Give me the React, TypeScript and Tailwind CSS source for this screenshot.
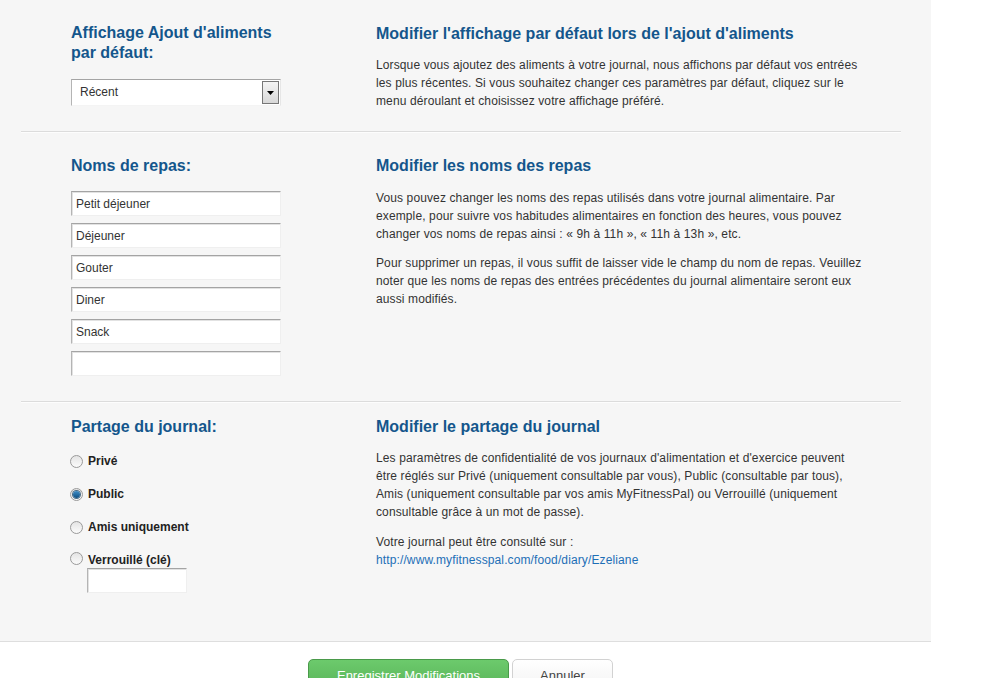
import React, { useState } from 'react';

const mealNames = ['Petit déjeuner', 'Déjeuner', 'Gouter', 'Diner', 'Snack', ''];

const privacyOptions = [
  { id: 'private', label: 'Privé' },
  { id: 'public', label: 'Public' },
  { id: 'friends', label: 'Amis uniquement' },
  { id: 'locked', label: 'Verrouillé (clé)' },
];

const Radio: React.FC<{ checked: boolean; onClick: () => void }> = ({ checked, onClick }) => (
  <span
    onClick={onClick}
    className="flex h-[13px] w-[13px] shrink-0 cursor-pointer items-center justify-center rounded-full border border-[#9a9a9a] bg-gradient-to-b from-[#e4e4e4] to-[#fbfbfb]"
  >
    {checked && (
      <span className="h-[7px] w-[7px] rounded-full bg-gradient-to-b from-[#3f8fc8] to-[#0d4f82] shadow-[0_0_0_1px_#4a6c86]" />
    )}
  </span>
);

const TextBox: React.FC<{ value: string; className?: string }> = ({ value, className = '' }) => (
  <input
    type="text"
    defaultValue={value}
    className={`block h-[25px] border border-t-[#a4a4a4] border-l-[#b4b4b4] border-r-[#efefef] border-b-[#efefef] bg-white pl-[4px] text-[12px] text-[#333] shadow-[inset_1px_1px_0_#e2e2e2] outline-none ${className}`}
  />
);

const App: React.FC = () => {
  const [privacy, setPrivacy] = useState('public');

  return (
    <div className="min-h-[678px] bg-white font-['Liberation_Sans',Arial,sans-serif] text-[#333]">
      <div className="w-[931px] border-b border-[#dedede] bg-[#f6f6f6]">
        <div className="ml-[21px] w-[880px]">
          {/* Default food display */}
          <div className="flex border-b border-[#dcdcdc] pb-[21px] pl-[50px] pt-[23px] shadow-[0_1px_0_#fdfdfd]">
            <div className="w-[305px]">
              <h2 className="text-[16px] font-bold leading-[20px] text-[#14568c]">
                Affichage Ajout d'aliments
                <br />
                par défaut:
              </h2>
              <div className="mt-[16px] flex h-[27px] w-[210px] border border-t-[#a4a4a4] border-l-[#b4b4b4] border-r-[#e6e6e6] border-b-[#f4f4f4] bg-white">
                <span className="flex-1 pl-[8px] text-[12px] leading-[25px] text-[#333]">Récent</span>
                <span className="my-[1px] mr-[1px] flex w-[17px] items-center justify-center border border-[#777] bg-gradient-to-b from-[#f4f4f4] to-[#d8d8d8]">
                  <svg width="7" height="4" viewBox="0 0 7 4">
                    <path d="M0 0h7L3.5 4z" fill="#000" />
                  </svg>
                </span>
              </div>
            </div>
            <div className="w-[492px] pt-[1px] tracking-[0.12px]">
              <h2 className="text-[16px] font-bold leading-[20px] tracking-normal text-[#14568c]">
                Modifier l'affichage par défaut lors de l'ajout d'aliments
              </h2>
              <p className="mt-[12px] text-[12px] leading-[18px]">
                Lorsque vous ajoutez des aliments à votre journal, nous affichons par défaut vos entrées les plus récentes.
                Si vous souhaitez changer ces paramètres par défaut, cliquez sur le menu déroulant et choisissez votre
                affichage préféré.
              </p>
            </div>
          </div>

          {/* Meal names */}
          <div className="flex border-b border-[#dcdcdc] pb-[25px] pl-[50px] pt-[24px] shadow-[0_1px_0_#fdfdfd]">
            <div className="w-[305px]">
              <h2 className="text-[16px] font-bold leading-[20px] text-[#14568c]">Noms de repas:</h2>
              <div className="mt-[15px] flex flex-col gap-[7px]">
                {mealNames.map((name, i) => (
                  <TextBox key={i} value={name} className="w-[210px]" />
                ))}
              </div>
            </div>
            <div className="w-[492px] tracking-[0.12px]">
              <h2 className="text-[16px] font-bold leading-[20px] tracking-normal text-[#14568c]">
                Modifier les noms des repas
              </h2>
              <p className="mt-[13px] text-[12px] leading-[18px]">
                Vous pouvez changer les noms des repas utilisés dans votre journal alimentaire. Par exemple, pour suivre
                vos habitudes alimentaires en fonction des heures, vous pouvez changer vos noms de repas ainsi : « 9h à
                11h », « 11h à 13h », etc.
              </p>
              <p className="mt-[11px] text-[12px] leading-[18px]">
                Pour supprimer un repas, il vous suffit de laisser vide le champ du nom de repas. Veuillez noter que les
                noms de repas des entrées précédentes du journal alimentaire seront eux aussi modifiés.
              </p>
            </div>
          </div>

          {/* Diary sharing */}
          <div className="flex pb-[48px] pl-[50px] pt-[15px]">
            <div className="w-[305px]">
              <h2 className="text-[16px] font-bold leading-[20px] text-[#14568c]">Partage du journal:</h2>
              <div className="mt-[14px] flex flex-col gap-[13px]">
                {privacyOptions.map((opt) => (
                  <div key={opt.id}>
                    <label className="flex h-[20px] items-center gap-[5px]">
                      <span className={opt.id === 'locked' ? '-ml-px -mt-[4px]' : '-ml-px'}>
                        <Radio checked={privacy === opt.id} onClick={() => setPrivacy(opt.id)} />
                      </span>
                      <span className="text-[12px] font-bold text-[#222]">{opt.label}</span>
                    </label>
                    {opt.id === 'locked' && <TextBox value="" className="-mt-[2px] ml-[16px] h-[24px] w-[100px]" />}
                  </div>
                ))}
              </div>
            </div>
            <div className="w-[492px] tracking-[0.12px]">
              <h2 className="text-[16px] font-bold leading-[20px] tracking-normal text-[#14568c]">
                Modifier le partage du journal
              </h2>
              <p className="mt-[12px] text-[12px] leading-[18px]">
                Les paramètres de confidentialité de vos journaux d'alimentation et d'exercice peuvent
                <br />
                être réglés sur Privé (uniquement consultable par vous), Public (consultable par tous), Amis (uniquement
                consultable par vos amis MyFitnessPal) ou Verrouillé (uniquement consultable grâce à un mot de passe).
              </p>
              <p className="mt-[12px] text-[12px] leading-[18px]">
                Votre journal peut être consulté sur :
                <br />
                <a href="#" className="text-[#1d6fb6]">
                  http://www.myfitnesspal.com/food/diary/Ezeliane
                </a>
              </p>
            </div>
          </div>
        </div>
      </div>

      <div className="flex gap-[3px] pl-[308px] pt-[17px]">
        <button className="h-[34px] w-[201px] rounded-[5px] border border-[#4a9a4a] bg-gradient-to-b from-[#6cca6c] to-[#57b257] text-[13px] text-white">
          Enregistrer Modifications
        </button>
        <button className="h-[34px] w-[101px] rounded-[5px] border border-[#d2d2d2] bg-gradient-to-b from-white to-[#f2f2f2] text-[13px] text-[#444]">
          Annuler
        </button>
      </div>
    </div>
  );
};

export default App;
